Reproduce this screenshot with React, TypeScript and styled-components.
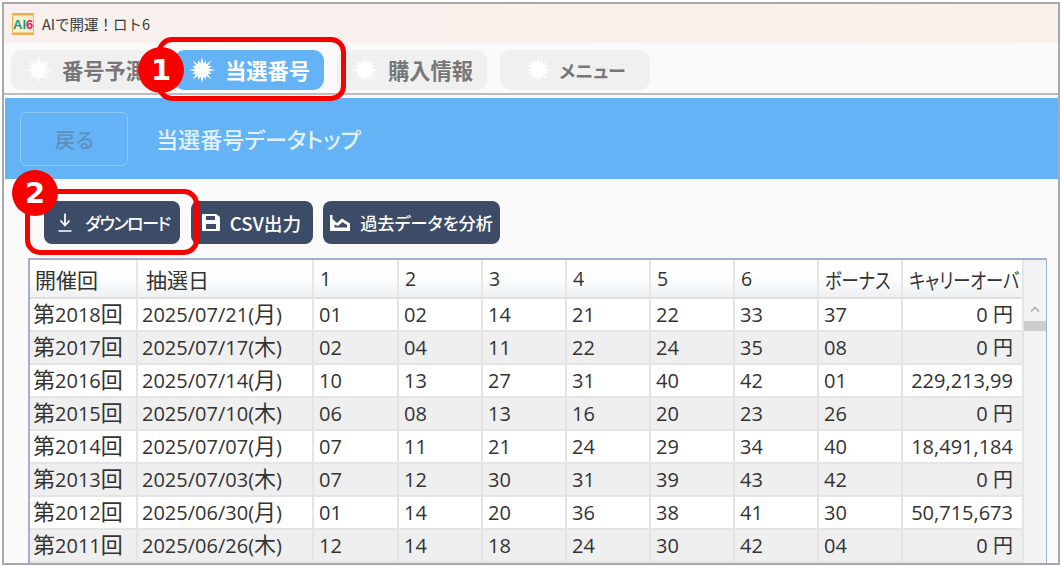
import { createGlobalStyle } from 'styled-components'
import styled from 'styled-components'

const CJK = `'Noto Sans CJK JP', 'Noto Sans', sans-serif`

const GlobalStyle = createGlobalStyle`
  html, body {
    margin: 0;
    padding: 0;
    background: #fff;
  }
`

const Page = styled.div`
  box-sizing: border-box;
  height: 566px;
  overflow: hidden;
  padding: 2px 2px 1px;
  position: relative;
  width: 1062px;
`

const Win = styled.div`
  background: #fafafa;
  border: 2px solid #a9a9a9;
  box-sizing: border-box;
  display: flex;
  flex-direction: column;
  height: 100%;
  overflow: hidden;
`

const TitleBar = styled.div`
  align-items: center;
  background: linear-gradient(90deg, #f7f0ee, #f9f1e9);
  display: flex;
  flex: none;
  gap: 8px;
  height: 39px;
  padding-left: 8px;
`

const AppName = styled.span`
  color: #3a3a3a;
  font-family: ${CJK};
  font-size: 14.5px;
`

const TabBar = styled.div`
  border-bottom: 2px solid #bdbdbd;
  box-sizing: border-box;
  display: flex;
  flex: none;
  gap: 13px;
  height: 52px;
  padding: 7px 0 0 7px;
`

const Tab = styled.div<{ $active?: boolean; $kana?: boolean }>`
  align-items: center;
  background: ${p => (p.$active ? '#63b3f6' : '#f0f0f0')};
  border-radius: 11px;
  box-sizing: border-box;
  color: ${p => (p.$active ? '#fff' : '#777')};
  display: flex;
  font-family: ${CJK};
  font-feature-settings: 'palt';
  font-size: ${p => (p.$kana ? 18 : 21.3)}px;
  font-weight: 700;
  gap: ${p => (p.$kana ? 7 : 9)}px;
  height: 40px;
  justify-content: center;
  line-height: 38px;
  overflow: hidden;
  white-space: nowrap;
  width: 150px;
`

const Content = styled.div`
  display: flex;
  flex: 1;
  flex-direction: column;
  min-height: 0;
  padding: 3px 0 0 1px;
`

const HeaderBand = styled.div`
  align-items: center;
  background: #63b3f6;
  display: flex;
  flex: none;
  gap: 28px;
  height: 81px;
  padding-left: 15px;
`

const BackButton = styled.div`
  align-items: center;
  border: 1px solid #8fc9f8;
  border-radius: 6px;
  box-sizing: border-box;
  color: #5f90bd;
  display: flex;
  font-family: ${CJK};
  font-size: 20px;
  font-weight: 500;
  height: 54px;
  justify-content: center;
  padding: 2px 0 0 2px;
  width: 108px;
`

const PageTitle = styled.div`
  color: #e3f1fd;
  font-family: ${CJK};
  font-feature-settings: 'palt';
  font-size: 22.1px;
  font-weight: 500;
  padding-bottom: 2px;
`

const Toolbar = styled.div`
  display: flex;
  flex: none;
  gap: 10.5px;
  padding: 22px 0 0 39px;
`

const ActionButton = styled.div<{ $width: number; $gap: number; $size: number; $tight?: boolean }>`
  align-items: center;
  background: #3d4c66;
  border-radius: 8px;
  box-sizing: border-box;
  color: #fff;
  display: flex;
  font-family: ${CJK};
  font-feature-settings: 'palt';
  font-size: ${p => p.$size}px;
  font-weight: 500;
  gap: ${p => p.$gap}px;
  height: 43px;
  justify-content: center;
  letter-spacing: ${p => (p.$tight ? '-1.4px' : 'normal')};
  padding-left: ${p => (p.$tight ? 4 : 0)}px;
  width: ${p => p.$width}px;
`

const TableFrame = styled.div`
  border: 2px solid #9fb3cf;
  border-bottom: none;
  border-right-width: 1px;
  display: flex;
  flex: 1;
  margin: 14px 11px 0 23px;
  min-height: 0;
  overflow: hidden;
`

const Grid = styled.table`
  border-collapse: separate;
  border-spacing: 0;
  color: #333;
  flex: none;
  font-family: 'Open Sans', ${CJK};
  font-size: 20px;
  table-layout: fixed;
  width: 994px;
`

const HeadCell = styled.th<{ $pad: number; $size: number }>`
  background: linear-gradient(180deg, #fff 40%, #eef0f3);
  border-bottom: 2px solid #dfdfdf;
  border-right: 2px solid #e6e6e6;
  box-sizing: border-box;
  font-feature-settings: 'palt';
  font-size: ${p => p.$size}px;
  font-weight: 400;
  height: 39px;
  overflow: hidden;
  padding: 0 0 0 ${p => p.$pad}px;
  text-align: left;
  white-space: nowrap;
`

const NarrowKana = styled.span`
  display: inline-block;
  transform: scaleX(0.82);
  transform-origin: left center;
`

const Row = styled.tr<{ $odd: boolean }>`
  background: ${p => (p.$odd ? '#fff' : '#efefef')};
`

const Cell = styled.td<{ $right?: boolean; $pad: number }>`
  border-bottom: 2px solid #e4e4e4;
  border-right: 2px solid #e4e4e4;
  box-sizing: border-box;
  height: 32.7px;
  line-height: 28px;
  overflow: hidden;
  padding: ${p => (p.$right ? '0 9px 0 0' : `0 0 0 ${p.$pad}px`)};
  text-align: ${p => (p.$right ? 'right' : 'left')};
  white-space: nowrap;
`

const BigGlyph = styled.span`
  font-size: 22px;
  line-height: 0;
`

const ScrollBar = styled.div`
  align-items: center;
  background: #f2f3f5;
  display: flex;
  flex: 1;
  flex-direction: column;
  padding-top: 46px;
`

const ScrollThumb = styled.div`
  align-self: stretch;
  background: #cdcdcd;
  height: 10px;
  margin-top: 9px;
`

const Marker = styled.div<{ $x: number; $y: number; $w: number; $h: number }>`
  border: 5px solid #f70000;
  border-radius: 15px;
  box-sizing: border-box;
  height: ${p => p.$h}px;
  left: ${p => p.$x}px;
  position: absolute;
  top: ${p => p.$y}px;
  width: ${p => p.$w}px;
`

const Badge = styled.div<{ $x: number; $y: number }>`
  align-items: center;
  background: #f70000;
  border-radius: 50%;
  color: #fff;
  display: flex;
  font-family: 'DejaVu Sans', sans-serif;
  font-size: 29px;
  font-weight: 700;
  height: 46px;
  justify-content: center;
  left: ${p => p.$x}px;
  position: absolute;
  top: ${p => p.$y}px;
  width: 46px;
`

function Logo () {
  return (
    <svg width='22' height='22' viewBox='0 0 22 22'>
      <rect width='22' height='22' fill='#eeb04a' />
      <rect x='1' y='2.5' width='20' height='17' fill='#fbeecb' />
      <text x='1' y='16' fontFamily='Liberation Sans' fontSize='13' fontWeight='700'>
        <tspan fill='#0f9a94'>AI</tspan>
        <tspan fill='#e0146e'>6</tspan>
      </text>
    </svg>
  )
}

function Burst () {
  const pts: string[] = []
  for (let i = 0; i < 32; i++) {
    const r = i % 2 === 1 ? 7 : i % 4 === 0 ? 13.5 : 10.5
    const a = (i * Math.PI) / 16
    pts.push(`${(14 + r * Math.sin(a)).toFixed(2)},${(14 - r * Math.cos(a)).toFixed(2)}`)
  }
  return (
    <svg width='28' height='28' viewBox='0 0 28 28' style={{ flex: 'none' }}>
      <polygon points={pts.join(' ')} fill='#fff' />
    </svg>
  )
}

function DownloadIcon () {
  return (
    <svg width='14' height='19' viewBox='0 0 14 19' fill='none' stroke='#fff' strokeWidth='1.7'>
      <path d='M7 0.5V12M2.5 7.5L7 12.5L11.5 7.5M0.5 18H13.5' />
    </svg>
  )
}

function SaveIcon () {
  return (
    <svg width='18' height='17' viewBox='0 0 18 17'>
      <path fill='#fff' fillRule='evenodd' d='M1 0H14L18 3V16A1 1 0 0 1 17 17H1A1 1 0 0 1 0 16V1A1 1 0 0 1 1 0ZM4 2V6H13V2ZM4 10V15H14V10Z' />
    </svg>
  )
}

function ChartIcon () {
  return (
    <svg width='20' height='16' viewBox='0 0 20 16'>
      <path fill='#fff' fillRule='evenodd' d='M0 0H2.5V4L7 8L12 3.5L20 8.5V16H0ZM4.5 9.5V12.5H17V10L12.5 7L8 11Z' />
    </svg>
  )
}

const columns = [108, 176, 85, 84, 84, 84, 84, 84, 84, 121]

const heads = ['開催回', '抽選日', '1', '2', '3', '4', '5', '6', 'ボーナス', 'キャリーオーバ']

const rows = [
  ['第2018回', '2025/07/21(月)', '01', '02', '14', '21', '22', '33', '37', '0 円'],
  ['第2017回', '2025/07/17(木)', '02', '04', '11', '22', '24', '35', '08', '0 円'],
  ['第2016回', '2025/07/14(月)', '10', '13', '27', '31', '40', '42', '01', '229,213,99'],
  ['第2015回', '2025/07/10(木)', '06', '08', '13', '16', '20', '23', '26', '0 円'],
  ['第2014回', '2025/07/07(月)', '07', '11', '21', '24', '29', '34', '40', '18,491,184'],
  ['第2013回', '2025/07/03(木)', '07', '12', '30', '31', '39', '43', '42', '0 円'],
  ['第2012回', '2025/06/30(月)', '01', '14', '20', '36', '38', '41', '30', '50,715,673'],
  ['第2011回', '2025/06/26(木)', '12', '14', '18', '24', '30', '42', '04', '0 円']
]

const tabs = ['番号予測', '当選番号', '購入情報', 'メニュー']

// kanji in the first two columns are set a little larger than the digits
function CellText ({ text }: { text: string }) {
  const parts = text.split(/([第回月木])/)
  return <>{parts.map((s, i) => (i % 2 === 1 ? <BigGlyph key={i}>{s}</BigGlyph> : s))}</>
}

export default function App () {
  return (
    <Page>
      <GlobalStyle />
      <Win>
        <TitleBar>
          <Logo />
          <AppName>AIで開運！ロト6</AppName>
        </TitleBar>
        <TabBar>
          {tabs.map((t, i) => (
            <Tab key={t} $active={i === 1} $kana={i === 3}>
              <Burst />
              {t}
            </Tab>
          ))}
        </TabBar>
        <Content>
          <HeaderBand>
            <BackButton>戻る</BackButton>
            <PageTitle>当選番号データトップ</PageTitle>
          </HeaderBand>
          <Toolbar>
            <ActionButton $width={136} $gap={13} $size={17} $tight><DownloadIcon />ダウンロード</ActionButton>
            <ActionButton $width={122} $gap={10} $size={18.7}><SaveIcon />CSV出力</ActionButton>
            <ActionButton $width={177} $gap={10} $size={17.2}><ChartIcon />過去データを分析</ActionButton>
          </Toolbar>
          <TableFrame>
            <Grid>
              <colgroup>
                {columns.map((w, i) => <col key={i} style={{ width: w }} />)}
              </colgroup>
              <thead>
                <tr>
                  {heads.map((h, i) => (
                    <HeadCell key={h} $size={i < 2 || i >= 8 ? 21 : 19.5} $pad={i === 1 ? 8 : i === 0 ? 5 : 6}>
                      {i >= 8 ? <NarrowKana>{h}</NarrowKana> : h}
                    </HeadCell>
                  ))}
                </tr>
              </thead>
              <tbody>
                {rows.map((r, i) => (
                  <Row key={r[0]} $odd={i % 2 === 0}>
                    {r.map((c, j) => (
                      <Cell key={j} $right={j === 9} $pad={j === 0 ? 3 : j === 1 ? 4 : 5}>
                        {j < 2 ? <CellText text={c} /> : c}
                      </Cell>
                    ))}
                  </Row>
                ))}
              </tbody>
            </Grid>
            <ScrollBar>
              <svg width='10' height='6' viewBox='0 0 10 6' fill='none' stroke='#aaa' strokeWidth='1.5'>
                <path d='M1 5.5L5 1.5L9 5.5' />
              </svg>
              <ScrollThumb />
            </ScrollBar>
          </TableFrame>
        </Content>
      </Win>
      <Marker $x={157} $y={37} $w={189} $h={64} />
      <Marker $x={25} $y={189} $w={174} $h={66} />
      <Badge $x={138} $y={47}>1</Badge>
      <Badge $x={12} $y={170}>2</Badge>
    </Page>
  )
}
